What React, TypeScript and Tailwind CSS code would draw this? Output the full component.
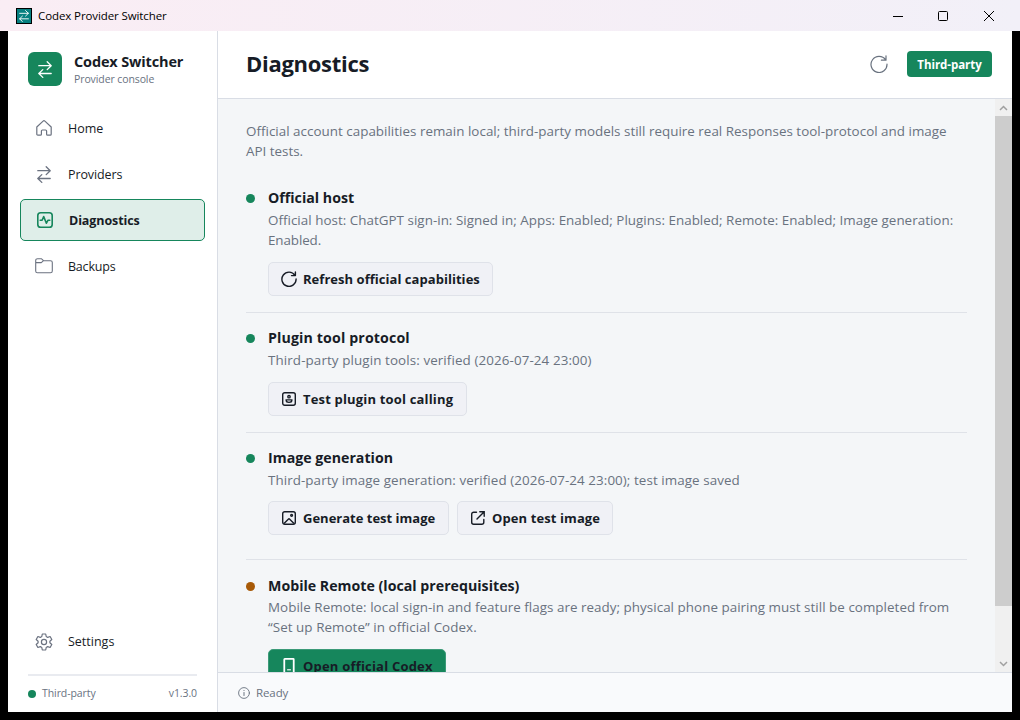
import type { ReactNode } from "react";

type IconProps = { className?: string };

function Svg({ className, children, box = 16 }: { className?: string; children: ReactNode; box?: number }) {
  return (
    <svg className={className} viewBox={`0 0 ${box} ${box}`} fill="none" stroke="currentColor" strokeWidth="1.2" strokeLinecap="round" strokeLinejoin="round">
      {children}
    </svg>
  );
}

const SwapIcon = ({ className }: IconProps) => (
  <svg className={className} viewBox="0 0 14 17" fill="none" stroke="currentColor" strokeWidth="1.3" strokeLinecap="round" strokeLinejoin="round">
    <path d="M.8 4.700h12.400M9.200.8l4 3.900-4 3.900M13.200 12.500H.8M4.800 8.600l-4 3.900 4 3.900" />
  </svg>
);
const HomeIcon = ({ className }: IconProps) => (
  <Svg className={className}>
    <path d="M.8 7 7.100 1.100a1.300 1.300 0 0 1 1.800 0L15.200 7v7.200a1 1 0 0 1-1 1h-2.600a1 1 0 0 1-1-1v-3.200a1 1 0 0 0-1-1H6.400a1 1 0 0 0-1 1v3.200a1 1 0 0 1-1 1H1.800a1 1 0 0 1-1-1z" />
  </Svg>
);
const PulseIcon = ({ className }: IconProps) => (
  <svg className={className} viewBox="0 0 16 16" fill="none" stroke="currentColor" strokeWidth="1.6" strokeLinecap="round" strokeLinejoin="round">
    <rect x="0.8" y="0.8" width="14.400" height="14.400" rx="2.800" />
    <path d="M3.200 8.300h1.900L6.700 4.600l2.700 6.600 1.500-2.900h1.900" />
  </svg>
);
const FolderIcon = ({ className }: IconProps) => (
  <svg className={className} viewBox="0 0 18 16" fill="none" stroke="currentColor" strokeWidth="1.1" strokeLinejoin="round">
    <path d="M.7 2.500a1.800 1.800 0 0 1 1.800-1.800h3.800l2.200 2h7a1.800 1.800 0 0 1 1.800 1.800v8.500a1.800 1.800 0 0 1-1.800 1.800h-13A1.800 1.800 0 0 1 .7 13zM.7 4.600h5.600l2.200-1.900" />
  </svg>
);
const GearIcon = ({ className }: IconProps) => (
  <Svg className={className} box={18}>
    <path d="M7.300 1h3.400l.5 2.500 1.500.9 2.400-.9 1.700 3L14.900 8.200v1.600l1.900 1.700-1.700 3-2.400-.9-1.500.9-.5 2.500H7.300l-.5-2.500-1.500-.9-2.400.9-1.700-3 1.900-1.700V8.200L1.200 6.500l1.700-3 2.400.9 1.500-.9z" />
    <circle cx="9" cy="9" r="2.600" />
  </Svg>
);
const RefreshIcon = ({ className }: IconProps) => (
  <Svg className={className} box={18}>
    <path d="M15.600 4.900A8 8 0 1 0 17 9M16 .8v4.400h-4.600" />
  </Svg>
);
const BoldRefreshIcon = ({ className }: IconProps) => (
  <svg className={className} viewBox="0 0 16 16" fill="none" stroke="currentColor" strokeWidth="1.4" strokeLinecap="round" strokeLinejoin="round">
    <path d="M13.900 4.300A7.100 7.100 0 1 0 15.100 8M14.400.9v3.700h-3.900" />
  </svg>
);
const ContactIcon = ({ className }: IconProps) => (
  <svg className={className} viewBox="0 0 14 14" fill="none" stroke="currentColor" strokeWidth="1.4">
    <rect x="0.7" y="0.7" width="12.600" height="12.600" rx="2" />
    <circle cx="7" cy="4.700" r="1.200" />
    <path d="M4.200 7.900h5.600v.7c0 1.100-1.200 1.800-2.800 1.800s-2.800-.7-2.800-1.800z" />
  </svg>
);
const ImageIcon = ({ className }: IconProps) => (
  <svg className={className} viewBox="0 0 14 14" fill="none" stroke="currentColor" strokeWidth="1.400">
    <rect x="0.7" y="0.7" width="12.600" height="12.600" rx="2" />
    <path d="m2 12.500 4.300-4.300a1 1 0 0 1 1.400 0l4.300 4.300" />
    <circle cx="9.600" cy="4.300" r="0.900" />
  </svg>
);
const OpenIcon = ({ className }: IconProps) => (
  <svg className={className} viewBox="0 0 14 14" fill="none" stroke="currentColor" strokeWidth="1.400" strokeLinecap="round">
    <path d="M5.500 1.200H2.700a2 2 0 0 0-2 2v8.100a2 2 0 0 0 2 2h8.100a2 2 0 0 0 2-2V8.500M8.800.8h4.400v4.400M13.200.8 6 8" />
  </svg>
);
const PhoneIcon = ({ className }: IconProps) => (
  <svg className={className} viewBox="0 0 12 18" fill="none" stroke="currentColor" strokeWidth="1.900">
    <rect x="1" y="1" width="10" height="16" rx="0.500" />
    <path d="M4 12.500h4" strokeWidth="1.200" />
  </svg>
);
const InfoIcon = ({ className }: IconProps) => (
  <Svg className={className} box={12}>
    <circle cx="6" cy="6" r="5.400" strokeWidth="0.9" />
    <path d="M6 5.500v3M6 3.500v.1" strokeWidth="1" />
  </Svg>
);

function NavItem({ icon, label, active, spacing = "pt-[2px]" }: { icon: ReactNode; label: string; active?: boolean; spacing?: string }) {
  return (
    <div
      className={
        active
          ? "flex h-[42px] items-center rounded-[5px] border border-[#16865c] bg-[#dfeee9] pl-4 font-bold"
          : "flex h-[42px] items-center pl-4"
      }
    >
      <span className={active ? "flex w-8 text-[#16865c]" : "flex w-8 text-[#6b7280]"}>{icon}</span>
      <span className={spacing}>{label}</span>
    </div>
  );
}

function ActionButton({ icon, label, className }: { icon: ReactNode; label: string; className: string }) {
  return (
    <button className={`flex h-[34px] shrink-0 items-center rounded-[5px] border border-[#dfe2e9] bg-[#f0f1f6] text-[13px] font-bold whitespace-nowrap ${className}`}>
      {icon}
      <span className="pt-px">{label}</span>
    </button>
  );
}

function Section({ title, titleClass, dot, lines, children, className }: { title: string; titleClass: string; dot: string; lines: [string, string][]; children: ReactNode; className: string }) {
  return (
    <section className={`flex w-[721px] shrink-0 gap-[13px] ${className}`}>
      <span className={`mt-[6px] size-[9px] shrink-0 rounded-full ${dot}`} />
      <div className="whitespace-nowrap">
        <h2 className={`text-[14.200px] leading-5 font-bold ${titleClass}`}>{title}</h2>
        <div className="text-[13.400px] leading-5 text-[#69727f]">
          {lines.map(([text, tracking]) => (
            <p key={text} className={tracking}>{text}</p>
          ))}
        </div>
        <div className="mt-3 flex gap-2">{children}</div>
      </div>
    </section>
  );
}

export default function App() {
  return (
    <div className="flex h-[720px] w-[1020px] flex-col overflow-hidden bg-black font-['Open_Sans','Noto_Sans',sans-serif] text-[#171c26]">
      <header className="flex h-[31px] shrink-0 items-center bg-linear-to-r from-[#faedf4] to-[#f2f0f8] pl-4 text-black">
        <span className="flex size-4 items-center justify-center border border-black bg-[#078080] text-white">
          <SwapIcon className="h-3 w-[10px]" />
        </span>
        <span className="ml-[6px] text-[11.500px] tracking-[-0.1px]">Codex Provider Switcher</span>
        <div className="ml-auto flex items-center">
          <svg className="w-[46px]" height="12" viewBox="0 0 46 12" stroke="currentColor"><path d="M19 6.500h10" /></svg>
          <svg className="w-[46px]" height="12" viewBox="0 0 46 12" stroke="currentColor" fill="none"><rect x="18.500" y="1.500" width="9" height="9" rx="1" /></svg>
          <svg className="w-[54px]" height="12" viewBox="0 0 54 12" stroke="currentColor"><path d="m18 1 10 10M28 1 18 11" /></svg>
        </div>
      </header>

      <div className="mx-2 mb-2 flex min-h-0 flex-1">
        <aside className="flex w-[210px] shrink-0 flex-col border-r border-[#d9dde5] bg-white px-3 text-[12.500px]">
          <div className="flex h-[76px] items-center pl-2">
            <span className="flex size-[34px] items-center justify-center rounded-[6px] bg-[#16865c] text-white">
              <SwapIcon className="h-[17px] w-[14px]" />
            </span>
            <div className="ml-3 whitespace-nowrap">
              <div className="pt-px text-[14.500px] leading-5 font-bold tracking-[-0.15px]">Codex Switcher</div>
              <div className="text-[10.500px] leading-[15px] tracking-[-0.1px] text-[#69727f]">Provider console</div>
            </div>
          </div>
          <nav className="flex flex-col gap-1">
            <NavItem icon={<HomeIcon className="size-4" />} label="Home" />
            <NavItem icon={<SwapIcon className="ml-px h-[17px] w-[14px]" />} label="Providers" spacing="pt-[2px] tracking-[-0.1px]" />
            <NavItem active icon={<PulseIcon className="size-4" />} label="Diagnostics" spacing="pt-[2px] tracking-[-0.1px]" />
            <NavItem icon={<FolderIcon className="-ml-px h-4 w-[18px]" />} label="Backups" spacing="pt-[2px] tracking-[-0.2px]" />
          </nav>
          <div className="mt-auto">
            <NavItem icon={<GearIcon className="-ml-px size-[18px]" />} label="Settings" spacing="" />
          </div>
          <div className="mx-2 mt-[11px] flex h-[38px] items-center border-t-2 border-[#e9ebf0] text-[10.500px] text-[#69727f]">
            <span className="mr-[6px] size-2 rounded-full bg-[#16865c]" />
            <span className="tracking-[-0.08px]">Third-party</span>
            <span className="ml-auto tracking-[-0.1px]">v1.3.0</span>
          </div>
        </aside>

        <div className="flex min-w-0 flex-1 flex-col">
          <div className="flex h-[68px] shrink-0 items-center border-b border-[#d9dde5] bg-white pr-5 pb-px pl-7">
            <h1 className="pb-px text-[22px] font-bold tracking-[-0.28px]">Diagnostics</h1>
            <RefreshIcon className="ml-auto size-[18px] text-[#69727f]" />
            <span className="ml-[19px] flex h-[26px] w-[85px] items-center justify-center rounded-[4px] bg-[#16865c] pt-px text-[11.500px] font-bold tracking-[-0.05px] text-white">Third-party</span>
          </div>

          <div className="flex min-h-0 flex-1 bg-[#f4f6f8]">
            <main className="flex min-w-0 flex-1 flex-col overflow-hidden pt-[22px] pl-7">
              <div className="mb-[27px] shrink-0 text-[13.400px] leading-5 whitespace-nowrap text-[#69727f]">
                <p className="tracking-[0.022px]">Official account capabilities remain local; third-party models still require real Responses tool-protocol and image</p>
                <p>API tests.</p>
              </div>
              <Section
                title="Official host"
                titleClass="mb-[2px]"
                dot="bg-[#16865c]"
                className="h-[125px] border-b border-[#dfe2e8]"
                lines={[["Official host: ChatGPT sign-in: Signed in; Apps: Enabled; Plugins: Enabled; Remote: Enabled; Image generation:", "tracking-[0.03px]"], ["Enabled.", "tracking-[-0.1px]"]]}
              >
                <ActionButton className="w-[224.500px] gap-[6px] pl-3 tracking-[0.04px]" icon={<BoldRefreshIcon className="size-4" />} label="Refresh official capabilities" />
              </Section>
              <Section
                title="Plugin tool protocol"
                titleClass="mb-[2px] tracking-[0.13px]"
                dot="bg-[#16865c]"
                className="mt-[15px] h-[105px] border-b border-[#dfe2e8]"
                lines={[["Third-party plugin tools: verified (2026-07-24 23:00)", "tracking-[0.1px]"]]}
              >
                <ActionButton className="w-[198.500px] gap-[7px] pl-[13px] tracking-[0.17px]" icon={<ContactIcon className="size-[14px]" />} label="Test plugin tool calling" />
              </Section>
              <Section
                title="Image generation"
                titleClass="mb-[2px]"
                dot="bg-[#16865c]"
                className="mt-[15px] h-[112px] border-b border-[#dfe2e8]"
                lines={[["Third-party image generation: verified (2026-07-24 23:00); test image saved", "tracking-[0.07px]"]]}
              >
                <ActionButton className="-mt-px w-[181px] gap-[7px] pl-[13px]" icon={<ImageIcon className="size-[14px]" />} label="Generate test image" />
                <ActionButton className="-mt-px w-[156px] gap-[7px] pl-[13px] tracking-[0.1px]" icon={<OpenIcon className="size-[14px]" />} label="Open test image" />
              </Section>
              <Section
                title="Mobile Remote (local prerequisites)"
                titleClass="mb-px"
                dot="bg-[#a85a08]"
                className="mt-4"
                lines={[["Mobile Remote: local sign-in and feature flags are ready; physical phone pairing must still be completed from", "tracking-[0.04px]"], ["“Set up Remote” in official Codex.", "tracking-[0.06px]"]]}
              >
                <button className="flex h-[34px] w-[177.500px] items-center rounded-[5px] border border-[#3b9a78] bg-[#16865c] pl-[14px] text-[13px] font-bold tracking-[0.2px]">
                  <PhoneIcon className="mr-2 h-[17px] w-3 text-white" />
                  <span className="pt-[2px]">Open official Codex</span>
                </button>
              </Section>
            </main>
            <div className="flex w-[17px] shrink-0 flex-col bg-[#f0f0f0] text-[#a0a0a0]">
              <span className="flex h-[17px] items-center justify-center">
                <svg width="9" height="6" viewBox="0 0 9 6" fill="none" stroke="currentColor" strokeWidth="1.500"><path d="m1 5 3.500-3.500L8 5" /></svg>
              </span>
              <span className="h-[490px] bg-[#cdcdcd]" />
              <span className="mt-auto flex h-[17px] items-center justify-center">
                <svg width="9" height="6" viewBox="0 0 9 6" fill="none" stroke="currentColor" strokeWidth="1.500"><path d="m1 1 3.500 3.500L8 1" /></svg>
              </span>
            </div>
          </div>

          <footer className="flex h-10 shrink-0 items-center border-t border-[#d9dde5] bg-[#f9fafc] pl-5 text-[11.500px] tracking-[-0.1px] text-[#69727f]">
            <InfoIcon className="mr-[6px] size-3" />
            Ready
          </footer>
        </div>
      </div>
    </div>
  );
}
